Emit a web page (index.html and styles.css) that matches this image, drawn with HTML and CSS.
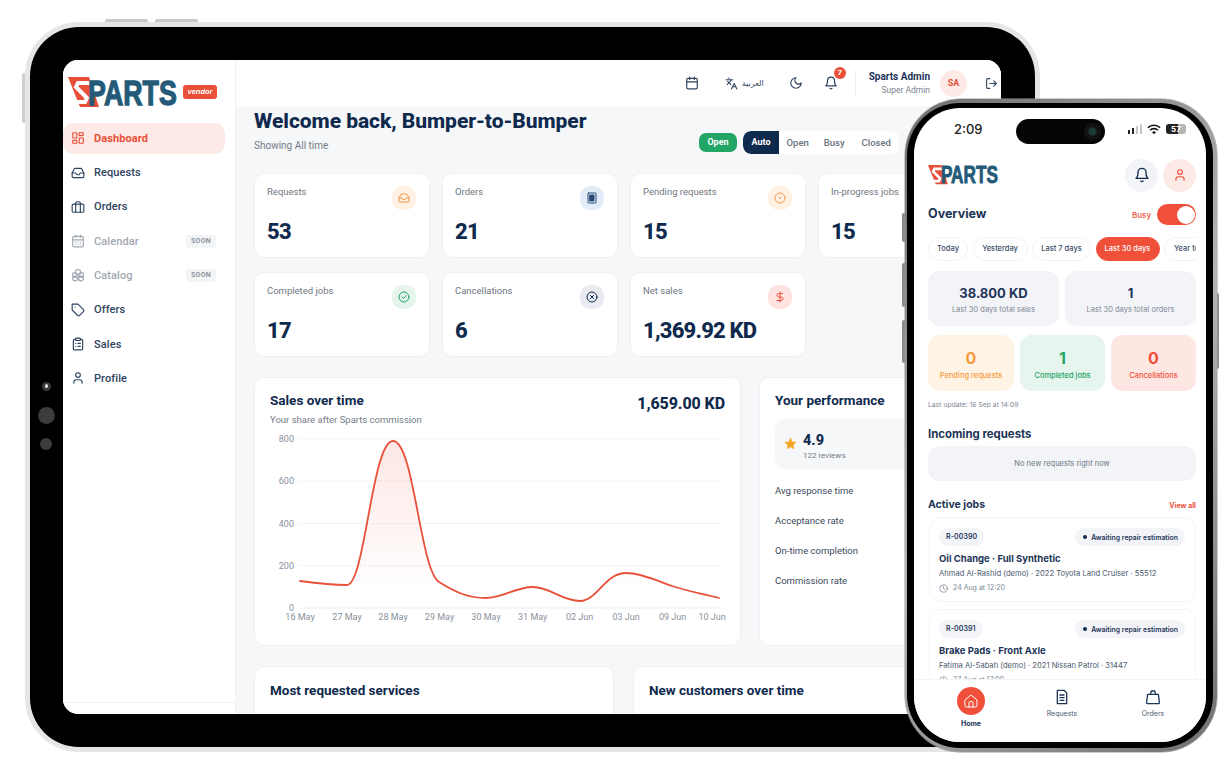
FILE: index.html
```html
<!DOCTYPE html>
<html lang="en">
<head>
<meta charset="utf-8">
<title>Sparts vendor dashboard</title>
<link rel="stylesheet" href="styles.css">
</head>
<body>
<svg class="sprite" aria-hidden="true">
  <symbol id="i-dash" viewBox="0 0 24 24"><rect x="3" y="3" width="7" height="9" rx="1"/><rect x="14" y="3" width="7" height="5" rx="1"/><rect x="14" y="12" width="7" height="9" rx="1"/><rect x="3" y="16" width="7" height="5" rx="1"/></symbol>
  <symbol id="i-inbox" viewBox="0 0 24 24"><path d="M2 12h6l2 3h4l2-3h6"/><path d="M5.5 5.1 2 12v6a2 2 0 0 0 2 2h16a2 2 0 0 0 2-2v-6l-3.500-6.900A2 2 0 0 0 16.800 4H7.200a2 2 0 0 0-1.700 1.100z"/></symbol>
  <symbol id="i-case" viewBox="0 0 24 24"><rect x="2" y="7" width="20" height="14" rx="2"/><path d="M16 21V5a2 2 0 0 0-2-2h-4a2 2 0 0 0-2 2v16"/></symbol>
  <symbol id="i-cal" viewBox="0 0 24 24"><rect x="3" y="4" width="18" height="18" rx="2"/><path d="M16 2v4M8 2v4M3 10h18"/></symbol>
  <symbol id="i-cal2" viewBox="0 0 24 24"><rect x="3" y="4" width="18" height="18" rx="2"/><path d="M16 2v4M8 2v4M3 10h18M8 14h.01M12 14h.01M16 14h.01M8 18h.01M12 18h.01M16 18h.01"/></symbol>
  <symbol id="i-boxes" viewBox="0 0 24 24"><circle cx="12" cy="7" r="4.500"/><circle cx="6.500" cy="12" r="4"/><circle cx="17.500" cy="12" r="4"/><circle cx="7" cy="18" r="4"/><circle cx="17" cy="18" r="4"/></symbol>
  <symbol id="i-tag" viewBox="0 0 24 24"><path d="M12 2H2v10l9.300 9.300c.9.900 2.500.900 3.400 0l6.600-6.600c.9-.9.900-2.500 0-3.400L12 2Z"/><path d="M7 7h.01"/></symbol>
  <symbol id="i-clip" viewBox="0 0 24 24"><rect x="8" y="2" width="8" height="4" rx="1"/><path d="M16 4h2a2 2 0 0 1 2 2v14a2 2 0 0 1-2 2H6a2 2 0 0 1-2-2V6a2 2 0 0 1 2-2h2"/><path d="M12 11h4M12 16h4M8 11h.01M8 16h.01"/></symbol>
  <symbol id="i-user" viewBox="0 0 24 24"><path d="M19 21v-2a4 4 0 0 0-4-4H9a4 4 0 0 0-4 4v2"/><circle cx="12" cy="7" r="4"/></symbol>
  <symbol id="i-lang" viewBox="0 0 24 24"><path d="m5 8 6 6M4 14l6-6 2-3M2 5h12M7 2h1M22 22l-5-10-5 10M14 18h6"/></symbol>
  <symbol id="i-moon" viewBox="0 0 24 24"><path d="M12 3a6 6 0 0 0 9 9 9 9 0 1 1-9-9Z"/></symbol>
  <symbol id="i-bell" viewBox="0 0 24 24"><path d="M6 8a6 6 0 0 1 12 0c0 7 3 9 3 9H3s3-2 3-9"/><path d="M10.300 21a1.900 1.900 0 0 0 3.400 0"/></symbol>
  <symbol id="i-out" viewBox="0 0 24 24"><path d="M9 21H5a2 2 0 0 1-2-2V5a2 2 0 0 1 2-2h4"/><path d="m16 17 5-5-5-5M21 12H9"/></symbol>
  <symbol id="i-target" viewBox="0 0 24 24"><circle cx="12" cy="12" r="10"/><circle cx="12" cy="12" r="1"/></symbol>
  <symbol id="i-ok" viewBox="0 0 24 24"><circle cx="12" cy="12" r="10"/><path d="m8 12 3 3 5-6"/></symbol>
  <symbol id="i-x" viewBox="0 0 24 24"><circle cx="12" cy="12" r="10"/><path d="m15 9-6 6M9 9l6 6"/></symbol>
  <symbol id="i-dollar" viewBox="0 0 24 24"><path d="M12 2v20M17 5H9.500a3.500 3.500 0 0 0 0 7h5a3.500 3.500 0 0 1 0 7H6"/></symbol>
  <symbol id="i-order" viewBox="0 0 24 24"><rect x="4" y="2" width="16" height="20" rx="1"/><rect x="8" y="6" width="8" height="12" fill="currentColor"/></symbol>
  <symbol id="i-clock" viewBox="0 0 24 24"><circle cx="12" cy="12" r="10"/><path d="M12 6v6l4 2"/></symbol>
  <symbol id="i-home" viewBox="0 0 24 24"><path d="M3 10.500 12 3l9 7.500V19a2 2 0 0 1-2 2H5a2 2 0 0 1-2-2z"/><path d="M9 21v-7a1 1 0 0 1 1-1h4a1 1 0 0 1 1 1v7"/></symbol>
  <symbol id="i-doc" viewBox="0 0 24 24"><path d="M5 2h10l4 4v16H5z"/><path d="M9 9h6M9 13h6M9 17h6"/></symbol>
  <symbol id="i-bag" viewBox="0 0 24 24"><path d="M4 8h16l1.500 11a2 2 0 0 1-2 3h-15a2 2 0 0 1-2-3z"/><path d="M8 8l1.500-5h5L16 8"/></symbol>
  <symbol id="i-mark" viewBox="0 0 31 31"><path class="mark-red" d="M0 0h21l10 30H12z"/><path class="mark-white" d="M23 6H10L8 10l11 11-2 4H7"/></symbol>
</svg>

<div class="canvas">
  <span class="t-btn t-btn-a"></span><span class="t-btn t-btn-b"></span><span class="t-btn-side"></span>

  <div class="tablet">
    <div class="bezel">
      <span class="cam cam-a"></span><span class="cam cam-b"></span><span class="cam cam-c"></span>
      <div class="screen">
        <aside class="sidebar">
          <div class="brand">
            <svg class="logo-lg" viewBox="0 0 112 31"><use href="#i-mark" width="31" height="31"/><g transform="scale(.744 1)"><text class="logo-text" x="27" y="28">PARTS</text></g></svg>
            <span class="vendor">vendor</span>
          </div>
          <nav class="nav">
            <a class="nav-item active"><svg class="ic14"><use href="#i-dash"/></svg>Dashboard</a>
            <a class="nav-item"><svg class="ic14"><use href="#i-inbox"/></svg>Requests</a>
            <a class="nav-item"><svg class="ic14"><use href="#i-case"/></svg>Orders</a>
            <a class="nav-item muted"><svg class="ic14"><use href="#i-cal2"/></svg>Calendar<span class="soon">SOON</span></a>
            <a class="nav-item muted"><svg class="ic14"><use href="#i-boxes"/></svg>Catalog<span class="soon">SOON</span></a>
            <a class="nav-item"><svg class="ic14"><use href="#i-tag"/></svg>Offers</a>
            <a class="nav-item"><svg class="ic14"><use href="#i-clip"/></svg>Sales</a>
            <a class="nav-item"><svg class="ic14"><use href="#i-user"/></svg>Profile</a>
          </nav>
          <div class="side-foot"></div>
        </aside>

        <div class="content">
          <header class="topbar">
            <svg class="ic14 tb-cal"><use href="#i-cal"/></svg>
            <div class="lang"><svg class="ic13"><use href="#i-lang"/></svg><span class="lang-text">العربية</span></div>
            <svg class="ic14 tb-moon"><use href="#i-moon"/></svg>
            <div class="bell"><svg class="ic14"><use href="#i-bell"/></svg><span class="badge">7</span></div>
            <span class="divider"></span>
            <div class="who"><strong>Sparts Admin</strong><span>Super Admin</span></div>
            <span class="avatar">SA</span>
            <svg class="ic13 logout"><use href="#i-out"/></svg>
          </header>

          <main class="main">
            <div class="head">
              <div>
                <h1>Welcome back, Bumper-to-Bumper</h1>
                <p class="showing">Showing All time</p>
              </div>
              <div class="controls">
                <span class="open-pill">Open</span>
                <div class="segment"><span class="seg on">Auto</span><span class="seg">Open</span><span class="seg">Busy</span><span class="seg seg-last">Closed</span></div>
              </div>
            </div>

            <div class="kpis">
              <div class="kpi"><div class="kpi-top"><span>Requests</span><i class="chip c-orange"><svg class="ic12"><use href="#i-inbox"/></svg></i></div><b>53</b></div>
              <div class="kpi"><div class="kpi-top"><span>Orders</span><i class="chip c-blue"><svg class="ic12"><use href="#i-order"/></svg></i></div><b>21</b></div>
              <div class="kpi"><div class="kpi-top"><span>Pending requests</span><i class="chip c-orange"><svg class="ic12"><use href="#i-target"/></svg></i></div><b>15</b></div>
              <div class="kpi"><div class="kpi-top"><span>In-progress jobs</span></div><b>15</b></div>
              <div class="kpi"><div class="kpi-top"><span>Completed jobs</span><i class="chip c-green"><svg class="ic12"><use href="#i-ok"/></svg></i></div><b>17</b></div>
              <div class="kpi"><div class="kpi-top"><span>Cancellations</span><i class="chip c-navy"><svg class="ic12"><use href="#i-x"/></svg></i></div><b>6</b></div>
              <div class="kpi"><div class="kpi-top"><span>Net sales</span><i class="chip c-red"><svg class="ic12"><use href="#i-dollar"/></svg></i></div><b>1,369.92 KD</b></div>
            </div>

            <div class="row-charts">
              <section class="panel">
                <div class="panel-head">
                  <div><h2>Sales over time</h2><p class="panel-sub">Your share after Sparts commission</p></div>
                  <strong class="total">1,659.00 KD</strong>
                </div>
                <svg class="chart" viewBox="254 430 487 200">
                  <defs><linearGradient id="area" x1="0" y1="0" x2="0" y2="1"><stop offset="0" stop-color="#e8503a" stop-opacity=".14"/><stop offset=".9" stop-color="#e8503a" stop-opacity="0"/></linearGradient></defs>
                  <g class="grid">
                    <path d="M300 439H719M300 481H719M300 523.500H719M300 565.700H719"/>
                  </g>
                  <path class="axis" d="M300 608H719"/>
                  <path class="area" d="M300 581C315 583 332 585 347 585C365 585 372 441 393 441C414 441 420 570 439 582C455 592 468 598 486 598C503 598 515 587 533 587C550 587 562 601 580 601C597 601 605 573 626 573C642 573 660 582 672 586C690 592 705 594 719 598V608H300Z"/>
                  <path class="line" d="M300 581C315 583 332 585 347 585C365 585 372 441 393 441C414 441 420 570 439 582C455 592 468 598 486 598C503 598 515 587 533 587C550 587 562 601 580 601C597 601 605 573 626 573C642 573 660 582 672 586C690 592 705 594 719 598"/>
                  <g class="ylab"><text x="294" y="442">800</text><text x="294" y="484">600</text><text x="294" y="527">400</text><text x="294" y="569">200</text><text x="294" y="611">0</text></g>
                  <g class="xlab"><text x="300" y="620">16 May</text><text x="347" y="620">27 May</text><text x="393" y="620">28 May</text><text x="439.500" y="620">29 May</text><text x="486" y="620">30 May</text><text x="532.700" y="620">31 May</text><text x="579.600" y="620">02 Jun</text><text x="626" y="620">03 Jun</text><text x="672.500" y="620">09 Jun</text><text x="712" y="620">10 Jun</text></g>
                </svg>
              </section>
              <section class="panel">
                <h2>Your performance</h2>
                <div class="rating">
                  <svg class="star" viewBox="0 0 24 24"><path d="m12 2 3 7 7.500.7-5.700 5 1.700 7.300L12 18l-6.500 4 1.700-7.300-5.700-5L9 9z"/></svg>
                  <div class="rating-text"><b>4.9</b><span>122 reviews</span></div>
                </div>
                <div class="perf-row">Avg response time</div>
                <div class="perf-row">Acceptance rate</div>
                <div class="perf-row">On-time completion</div>
                <div class="perf-row">Commission rate</div>
              </section>
            </div>

            <div class="row-bottom">
              <section class="panel low"><h2>Most requested services</h2></section>
              <section class="panel low"><h2>New customers over time</h2></section>
            </div>
          </main>
        </div>
      </div>
    </div>
  </div>

  <span class="p-btn p-a"></span><span class="p-btn p-b"></span><span class="p-btn p-c"></span><span class="p-btn p-d"></span>

  <div class="phone">
    <div class="p-black">
      <div class="p-screen">
        <span class="island"><i></i></span>
        <div class="status">
          <span class="clock">2:09</span>
          <div class="status-r">
            <span class="bars"><i></i><i></i><i class="dim"></i><i class="dim"></i></span>
            <svg class="wifi" viewBox="0 0 16 12"><path d="M1 4a10 10 0 0 1 14 0M3.500 6.800a6.500 6.500 0 0 1 9 0"/><path class="wifi-dot" d="M8 11.500 5.800 9.200a3 3 0 0 1 4.400 0z"/></svg>
            <span class="batt">57</span>
          </div>
        </div>
        <div class="p-body">
          <div class="p-head">
            <svg class="logo-sm" viewBox="0 0 112 31"><use href="#i-mark" width="31" height="31"/><g transform="scale(.744 1)"><text class="logo-text" x="27" y="28">PARTS</text></g></svg>
            <div class="p-head-r">
              <span class="round r-gray"><svg class="ic16"><use href="#i-bell"/></svg></span>
              <span class="round r-pink"><svg class="ic14"><use href="#i-user"/></svg></span>
            </div>
          </div>
          <div class="p-over">
            <h3>Overview</h3>
            <div class="busy">Busy<span class="toggle"><i></i></span></div>
          </div>
          <div class="chips">
            <span class="pchip w-a">Today</span><span class="pchip w-b">Yesterday</span><span class="pchip w-c">Last 7 days</span><span class="pchip w-d on">Last 30 days</span><span class="pchip">Year to date</span>
          </div>
          <div class="p-stats">
            <div class="pstat"><b>38.800 KD</b><span>Last 30 days total sales</span></div>
            <div class="pstat"><b>1</b><span>Last 30 days total orders</span></div>
          </div>
          <div class="p-mini">
            <div class="mini m-o"><b>0</b><span>Pending requests</span></div>
            <div class="mini m-g"><b>1</b><span>Completed jobs</span></div>
            <div class="mini m-r"><b>0</b><span>Cancellations</span></div>
          </div>
          <p class="updated">Last update: 16 Sep at 14:09</p>
          <h4 class="in-title">Incoming requests</h4>
          <div class="empty">No new requests right now</div>
          <div class="active-head"><h4>Active jobs</h4><a>View all</a></div>
          <div class="jobs">
            <article class="job">
              <div class="job-top"><span class="ref">R-00390</span><span class="state"><i></i>Awaiting repair estimation</span></div>
              <h5>Oil Change · Full Synthetic</h5>
              <p>Ahmad Al-Rashid (demo) · 2022 Toyota Land Cruiser · 55512</p>
              <time><svg class="ic9"><use href="#i-clock"/></svg>24 Aug at 12:20</time>
            </article>
            <article class="job">
              <div class="job-top"><span class="ref">R-00391</span><span class="state"><i></i>Awaiting repair estimation</span></div>
              <h5>Brake Pads · Front Axle</h5>
              <p>Fatima Al-Sabah (demo) · 2021 Nissan Patrol · 31447</p>
              <time><svg class="ic9"><use href="#i-clock"/></svg>27 Aug at 17:00</time>
            </article>
          </div>
        </div>
        <nav class="tabbar">
          <a class="tab tab-home"><span class="home-dot"><svg class="ic16"><use href="#i-home"/></svg></span><b>Home</b></a>
          <a class="tab"><svg class="ic16"><use href="#i-doc"/></svg>Requests</a>
          <a class="tab"><svg class="ic16"><use href="#i-bag"/></svg>Orders</a>
        </nav>
      </div>
    </div>
  </div>
</div>
</body>
</html>
```
FILE: styles.css
```css
* { box-sizing: border-box; }
html, body { margin: 0; padding: 0; background: #fff; }
body { font-family: Roboto, "Liberation Sans", sans-serif; color: #0f2a4d; }
h1, h2, h3, h4, h5, p { margin: 0; }
i { font-style: normal; }
.sprite { display: none; }
svg { fill: none; stroke: currentColor; stroke-width: 2; stroke-linecap: round; stroke-linejoin: round; flex: none; }
.ic9 { width: 9px; height: 9px; }
.ic12 { width: 12px; height: 12px; }
.ic13 { width: 13px; height: 13px; }
.ic14 { width: 14px; height: 14px; }
.ic16 { width: 16px; height: 16px; }

.canvas { position: relative; width: 1230px; height: 770px; overflow: hidden; }

/* device frames sit on a free canvas */
.t-btn { position: absolute; top: 19px; width: 43px; height: 3px; background: #c9c9c9; border-radius: 2px 2px 0 0; }
.t-btn-a { left: 105px; }
.t-btn-b { left: 155px; }
.t-btn-side { position: absolute; left: 22px; top: 73px; width: 3px; height: 50px; background: #cfcfcf; border-radius: 2px 0 0 2px; }
.tablet { position: absolute; left: 25px; top: 22px; width: 1015px; height: 730px; padding: 5px; background: #e6e6e6; border-radius: 54px; }
.bezel { position: relative; height: 100%; padding: 33px 34px 33px 33px; background: #000; border-radius: 49px; }
.cam { position: absolute; background: #3c3c3c; border-radius: 50%; }
.cam-a { left: 12px; top: 355px; width: 9px; height: 9px; background: radial-gradient(circle at 50% 45%, #ddd 0 1.500px, #3a3a3a 2px); }
.cam-b { left: 8px; top: 380px; width: 17px; height: 17px; }
.cam-c { left: 10px; top: 411px; width: 12px; height: 12px; }
.screen { display: flex; height: 100%; background: #fff; border-radius: 15px; overflow: hidden; }

.sidebar { display: flex; flex-direction: column; width: 173px; flex: none; background: #fff; border-right: 1px solid #f0f2f5; }
.brand { display: flex; align-items: center; height: 63px; padding-left: 5px; gap: 3px; }
.logo-lg { width: 112px; height: 31px; margin-top: 1px; overflow: visible; }
.logo-text { font-family: "Liberation Sans", sans-serif; font-weight: 700; font-size: 36px; fill: #235a78; stroke: #235a78; stroke-width: 1.300; stroke-linejoin: miter; }
.mark-red { fill: #e8503a; stroke: none; }
.mark-white { stroke: #fff; stroke-width: 4; stroke-linecap: butt; stroke-linejoin: miter; fill: none; }
.vendor { display: block; margin-top: 1px; width: 34px; height: 14px; background: #e8503a; border-radius: 3px; color: #fff; font: italic 700 7.500px/14px "Liberation Sans", sans-serif; text-align: center; }

.nav { flex: 1; }
.nav-item { display: flex; align-items: center; gap: 9px; width: 162px; height: 30.500px; margin-bottom: 3.800px; padding-left: 8px; padding-right: 9px; font-size: 11px; font-weight: 500; letter-spacing: .1px; color: #2f4460; border-radius: 11px; }
.nav-item.active { background: #fdeae6; color: #e8503a; font-weight: 700; }
.muted { color: #a2a8b1; }
.soon { margin-left: auto; padding: 0 5px; height: 13px; background: #f3f4f6; border-radius: 3px; font-size: 7px; font-weight: 700; line-height: 13px; letter-spacing: .3px; color: #8c939d; }
.side-foot { height: 12px; border-top: 1px solid #eef0f3; }

.content { display: flex; flex-direction: column; flex: 1; min-width: 0; background: #f5f7f9; }
.topbar { display: flex; align-items: center; justify-content: flex-end; height: 46px; flex: none; padding-right: 3px; background: #fff; color: #2f4460; }
.tb-cal { margin-right: 26px; }
.tb-moon { margin-right: 21px; }
.lang { display: flex; align-items: center; gap: 4px; margin-right: 25px; }
.lang-text { font-family: "DejaVu Sans", sans-serif; font-size: 8px; }
.bell { position: relative; display: flex; margin-right: 17px; }
.badge { position: absolute; left: 10px; top: -9px; width: 12px; height: 12px; background: #e8503a; border-radius: 50%; color: #fff; font-size: 8px; font-weight: 700; line-height: 12px; text-align: center; }
.divider { width: 1px; height: 26px; background: #eef0f3; margin-right: 13px; }
.who { display: flex; flex-direction: column; align-items: flex-end; gap: 3px; margin-right: 10px; }
.who strong { font-size: 10px; font-weight: 700; color: #1d3557; line-height: 11px; }
.who span { font-size: 8.500px; color: #7b8490; line-height: 10px; }
.avatar { width: 27px; height: 27px; border-radius: 50%; background: #fdeae6; color: #e8503a; font-size: 9px; font-weight: 700; line-height: 27px; text-align: center; margin-right: 18px; }

.main { flex: 1; padding: 2px 0 0 18px; overflow: hidden; }
.head { display: flex; justify-content: space-between; align-items: flex-end; width: 645px; }
h1 { font-size: 21px; font-weight: 800; line-height: 26px; letter-spacing: -.05px; color: #0f2a4d; }
.showing { margin-top: 4px; font-size: 10px; line-height: 16px; color: #747c87; }
.controls { display: flex; align-items: center; gap: 6px; }
.open-pill { width: 38px; height: 19px; background: #22a565; border-radius: 7px; color: #fff; font-size: 9px; font-weight: 700; line-height: 19px; text-align: center; }
.segment { display: flex; align-items: center; width: 156px; height: 23px; background: #fff; border-radius: 8px; overflow: hidden; font-size: 9.500px; font-weight: 500; color: #6b7480; }
.seg { padding: 0 7.500px; }
.seg-last { padding-left: 9.500px; }
.seg.on { width: 36px; height: 23px; padding: 0; background: #0f2a4d; border-radius: 8px 0 0 8px; color: #fff; font-weight: 700; line-height: 23px; text-align: center; font-size: 9px; }

.kpis { display: grid; grid-template-columns: repeat(4, 176px); gap: 14px 12px; margin-top: 19px; }
.kpi { height: 85px; padding: 11px 13px 0 12px; background: #fff; border: 1px solid #eef0f3; border-radius: 10px; }
.kpi-top { display: flex; justify-content: space-between; height: 33px; font-size: 9.500px; line-height: 14px; color: #6f7782; }
.kpi b { display: block; margin-top: 1px; font-size: 22px; font-weight: 800; line-height: 26px; letter-spacing: -.8px; color: #0f2a4d; }
.chip { display: flex; align-items: center; justify-content: center; width: 24px; height: 24px; margin-top: 1px; border-radius: 10px; }
.c-orange { background: #fff1e3; color: #ef9a4a; }
.c-blue { background: #e3edf9; color: #2a4a73; }
.c-green { background: #e5f4ec; color: #22a565; }
.c-navy { background: #e9ebf0; color: #0f2a4d; }
.c-red { background: #fde4e0; color: #e8503a; }

.row-charts { display: grid; grid-template-columns: 487px 235px; gap: 18px; margin-top: 20px; }
.panel { height: 269px; padding: 14px 15px 0; background: #fff; border: 1px solid #eef0f3; border-radius: 10px; }
.panel-head { display: flex; justify-content: space-between; }
h2 { font-size: 13.500px; font-weight: 700; line-height: 16px; color: #0f2a4d; }
.panel-sub { margin-top: 5px; font-size: 9.500px; line-height: 13px; color: #747c87; }
.total { margin-top: 1px; font-size: 16px; font-weight: 800; line-height: 22px; letter-spacing: -.1px; }
.chart { display: block; width: 487px; height: 200px; margin: 4px 0 0 -16px; }
.grid { stroke: #eceef1; stroke-width: 1; stroke-dasharray: 2 2; }
.axis { stroke: #eceef1; stroke-width: 1; }
.area { fill: url(#area); stroke: none; }
.line { stroke: #e8503a; stroke-width: 1.800; }
.ylab, .xlab { stroke: none; fill: #8a919b; font-size: 9px; }
.ylab { text-anchor: end; }
.xlab { text-anchor: middle; }
.rating { display: flex; align-items: center; gap: 6px; height: 50px; margin-top: 11px; padding-left: 9px; background: #f5f7f9; border-radius: 10px; }
.star { width: 13px; height: 13px; margin-top: -1px; fill: #f5a623; stroke: #f5a623; stroke-width: 1; }
.rating-text { margin-top: 4px; }
.rating b { display: block; font-size: 14.500px; font-weight: 800; line-height: 17px; }
.rating span { display: block; font-size: 8px; line-height: 11px; margin-top: 1px; color: #747c87; }
.perf-row { height: 30px; font-size: 9.500px; line-height: 30px; color: #3a4a5c; }
.rating + .perf-row { margin-top: 7px; }
.row-bottom { display: grid; grid-template-columns: 360px 360px; gap: 19px; margin-top: 20px; }
.low { height: 100px; padding-top: 15px; }

/* phone */
.p-btn { position: absolute; background: #8a8a8a; }
.p-a { left: 902px; top: 213px; width: 3px; height: 29px; border-radius: 2px 0 0 2px; }
.p-b { left: 902px; top: 263px; width: 3px; height: 44px; border-radius: 2px 0 0 2px; }
.p-c { left: 902px; top: 320px; width: 3px; height: 43px; border-radius: 2px 0 0 2px; }
.p-d { left: 1216px; top: 293px; width: 3px; height: 76px; border-radius: 0 2px 2px 0; }
.phone { position: absolute; left: 905px; top: 99px; width: 312px; height: 653px; padding: 4px 4px 4px 2px; background: linear-gradient(135deg, #6f6f6f, #b5b5b5 50%, #707070); border-radius: 56px; box-shadow: 0 0 0 .5px #999; font-family: Inter, "Noto Sans", sans-serif; }
.p-black { height: 100%; padding: 5px 7px 6px; background: #000; border-radius: 53px; }
.p-screen { position: relative; height: 100%; background: #fff; border-radius: 46px; overflow: hidden; }
.island { position: absolute; left: 102px; top: 11px; width: 89px; height: 25px; background: #050505; border-radius: 13px; }
.island i { position: absolute; right: 4px; top: 4px; width: 17px; height: 17px; border-radius: 50%; background: radial-gradient(circle at 50% 50%, #1b3a36 0 3px, #111 5px); }
.status { display: flex; justify-content: space-between; align-items: center; height: 42px; padding: 0 20px 0 40px; }
.clock { font-size: 13px; font-weight: 500; color: #222; }
.status-r { display: flex; align-items: center; gap: 5px; }
.bars { display: flex; align-items: flex-end; gap: 1.500px; height: 10px; }
.bars i { width: 2.500px; background: #222; }
.bars i:nth-child(1) { height: 4px; }
.bars i:nth-child(2) { height: 6px; }
.bars i:nth-child(3) { height: 8px; }
.bars i:nth-child(4) { height: 10px; }
.bars .dim { background: #c6c6c6; }
.wifi { width: 14px; height: 11px; stroke: #111; stroke-width: 1.800; stroke-linecap: butt; }
.wifi-dot { fill: #111; stroke: none; }
.batt { width: 20px; height: 10px; background: linear-gradient(90deg, #222 0 58%, #b5b5b5 58%); border-radius: 3px; color: #fff; font-size: 8px; font-weight: 700; line-height: 10px; text-align: center; }

.p-body { padding: 8px 10px 0 14px; }
.p-head { display: flex; justify-content: space-between; align-items: center; height: 34px; }
.logo-sm { width: 72px; height: 20px; overflow: visible; }
.p-head-r { display: flex; gap: 5px; }
.round { display: flex; align-items: center; justify-content: center; width: 33px; height: 33px; border-radius: 50%; }
.r-gray { background: #f2f4f8; color: #0f2a4d; }
.r-pink { background: #fdeae6; color: #f0503a; }
.p-over { display: flex; justify-content: space-between; align-items: center; height: 21px; margin-top: 12px; }
h3 { margin-top: -2px; font-size: 12.500px; font-weight: 700; color: #1d3557; }
.busy { display: flex; align-items: center; gap: 6px; font-size: 8px; font-weight: 500; color: #f0503a; }
.toggle { position: relative; width: 39px; height: 21px; background: #f0503a; border-radius: 11px; }
.toggle i { position: absolute; right: 1.500px; top: 1.500px; width: 18px; height: 18px; background: #fff; border-radius: 50%; }
.chips { display: flex; gap: 4.500px; height: 24px; margin-top: 12px; overflow: hidden; }
.pchip { flex: none; height: 24px; padding: 0 9px; border: 1px solid #f0f2f5; border-radius: 12px; font-size: 7.500px; font-weight: 500; line-height: 22px; text-align: center; color: #3a4d66; white-space: nowrap; }
.pchip.on { background: #f0503a; border-color: #f0503a; color: #fff; }
.w-a { width: 40px; padding: 0; }
.w-b { width: 55px; padding: 0; }
.w-c { width: 59px; padding: 0; }
.w-d { width: 64px; padding: 0; }
.p-stats { display: grid; grid-template-columns: 131px 131px; gap: 6px; margin-top: 10px; }
.pstat { display: flex; flex-direction: column; align-items: center; justify-content: center; gap: 4px; height: 55px; padding-top: 2px; background: #f2f4f8; border-radius: 12px; }
.pstat b { font-size: 13px; font-weight: 700; line-height: 16px; color: #1d3557; }
.pstat span { font-size: 7.500px; line-height: 10px; color: #7e8794; }
.p-mini { display: grid; grid-template-columns: 86px 85px 85px; gap: 6px; margin-top: 9px; }
.mini { display: flex; flex-direction: column; align-items: center; justify-content: center; gap: 2px; height: 56px; padding-top: 2px; border-radius: 12px; }
.mini b { font-size: 16px; font-weight: 700; line-height: 20px; }
.mini span { font-size: 7.500px; font-weight: 500; line-height: 11px; }
.m-o { background: #fff3e5; color: #f59a3c; }
.m-g { background: #e6f5ed; color: #22a565; }
.m-r { background: #fee6e2; color: #f0503a; }
.updated { margin-top: 9px; font-size: 6.800px; line-height: 10px; color: #7e8794; }
h4 { font-size: 10.500px; font-weight: 700; line-height: 16px; color: #1d3557; }
.in-title { margin-top: 16px; font-size: 11.400px; }
.empty { height: 35px; margin-top: 4px; background: #f2f4f8; border-radius: 12px; font-size: 7.500px; line-height: 35px; text-align: center; color: #6f7782; }
.active-head { display: flex; justify-content: space-between; align-items: center; height: 16px; margin-top: 16px; }
.active-head a { font-size: 7px; font-weight: 700; color: #f0503a; }
.jobs { display: flex; flex-direction: column; gap: 7px; margin: 4px 0 0 1px; }
.job { height: 85px; padding: 10px 10px 0 9px; background: #fff; border: 1px solid #f2f4f8; border-radius: 12px; }
.job-top { display: flex; justify-content: space-between; align-items: center; }
.ref { height: 18px; padding: 0 7px; background: #f2f4f8; border-radius: 9px; font-size: 7px; font-weight: 600; line-height: 18px; color: #1d3557; letter-spacing: .1px; }
.state { display: flex; align-items: center; gap: 4px; height: 18px; padding: 0 7px 0 8px; background: #f2f4f8; border-radius: 9px; font-size: 6.900px; font-weight: 600; color: #1d3557; }
.state i { width: 4px; height: 4px; border-radius: 50%; background: #0f2a4d; }
h5 { margin-top: 6px; font-size: 9.500px; font-weight: 700; line-height: 14px; color: #1d3557; }
.job p { font-size: 7.600px; line-height: 13px; margin-top: 1px; color: #4a5a6e; white-space: nowrap; }
.job time { display: flex; align-items: center; gap: 5px; margin-top: 2px; font-size: 7px; line-height: 12px; color: #7e8794; }
.tabbar { position: absolute; left: 0; right: 0; bottom: 0; display: grid; grid-template-columns: repeat(3, 91px); height: 63px; padding-left: 11.500px; background: #fff; border-top: 1px solid #f4f5f7; }
.tab { display: flex; flex-direction: column; align-items: center; gap: 4px; padding-top: 9px; font-size: 7px; color: #4a5a6e; }
.tab svg { color: #1d3557; }
.tab-home { padding-top: 7px; gap: 4px; }
.tab-home b { color: #1d3557; font-size: 7px; font-weight: 700; }
.home-dot { display: flex; align-items: center; justify-content: center; width: 28px; height: 28px; background: #f0503a; border-radius: 50%; }
.tab .home-dot svg { color: #fff; stroke-width: 1.500; }
```
